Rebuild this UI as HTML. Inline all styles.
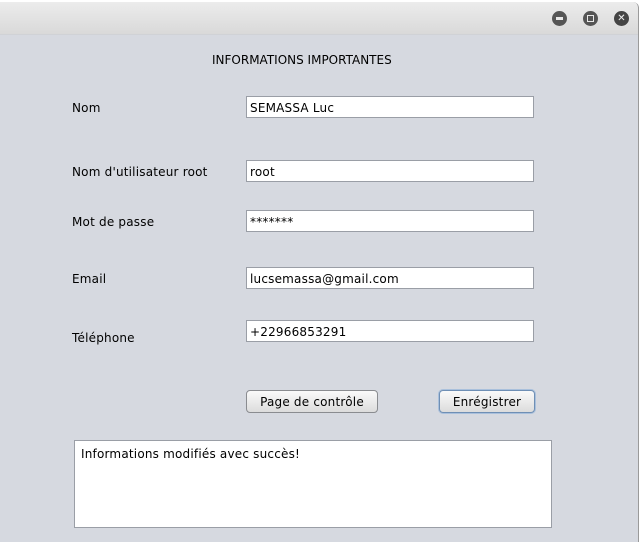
<!DOCTYPE html>
<html><head><style>
*{margin:0;padding:0;box-sizing:border-box}
body{width:641px;height:531px;background:#fff;position:relative;overflow:hidden;font-family:"DejaVu Sans","Liberation Sans",sans-serif;font-size:12px;letter-spacing:0.2px;color:#000}
.win{position:absolute;left:0;top:2px;width:639px;height:540px;background:#d6d9e0;border-right:1px solid #9a9a9a;border-top-right-radius:6px;overflow:hidden}
.tb{position:absolute;left:0;top:0;width:100%;height:33px;background:linear-gradient(#ececec,#d9d9d9);border-bottom:1px solid #d0d2d6}
.c{position:absolute;top:9px;width:15px;height:15px;border-radius:50%;background:#555}
.t{position:absolute;white-space:nowrap}
.in{position:absolute;left:246px;width:288px;height:22px;background:#fff;border:1px solid #9a9ea6;padding:4px 0 0 3px}
.btn{position:absolute;top:390px;height:23px;border:1px solid #8a8c90;border-radius:4px;background:linear-gradient(#fafafa,#dcdcdc);text-align:center;line-height:22px}
</style></head><body>
<div class="win">
<div class="tb">
<div class="c" style="left:552px"><div style="position:absolute;left:4px;top:6px;width:7px;height:3px;background:#e8e8e8"></div></div>
<div class="c" style="left:583px"><div style="position:absolute;left:4px;top:4px;width:7px;height:7px;border:1.5px solid #e8e8e8"></div></div>
<div class="c" style="left:614px;background:#444;color:#eee;font-size:10px;line-height:15px;text-align:center">✕</div>
</div>
<div class="t" style="left:212px;top:51px;letter-spacing:0">INFORMATIONS IMPORTANTES</div>
<div class="t" style="left:72px;top:99px">Nom</div>
<div class="t" style="left:72px;top:163px">Nom d'utilisateur root</div>
<div class="t" style="left:72px;top:213px">Mot de passe</div>
<div class="t" style="left:72px;top:270px">Email</div>
<div class="t" style="left:72px;top:329px">Téléphone</div>
<div class="in" style="top:94px">SEMASSA Luc</div>
<div class="in" style="top:158px">root</div>
<div class="in" style="top:208px">*******</div>
<div class="in" style="top:265px">lucsemassa@gmail.com</div>
<div class="in" style="top:318px">+22966853291</div>
<div class="btn" style="left:246px;width:132px;top:388px">Page de contrôle</div>
<div class="btn" style="left:439px;width:96px;top:388px;border-color:#6f8fb5;box-shadow:0 0 0 1px #a9c0dc">Enrégistrer</div>
<div style="position:absolute;left:74px;top:438px;width:478px;height:88px;background:#fff;border:1px solid #9a9ea6;padding:6px 6px">Informations modifiés avec succès!</div>
</div>
</body></html>
